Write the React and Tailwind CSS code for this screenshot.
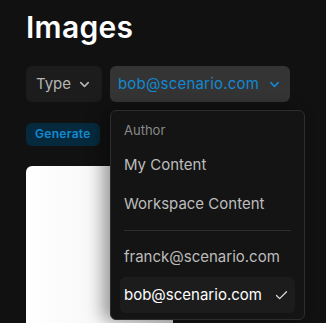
import React from "react";
import { ChevronDown, Check } from "lucide-react";

export default function App() {
  return (
    <div
      className="w-[326px] h-[323px] bg-[#111111] overflow-hidden relative"
      style={{ fontFamily: "Inter, 'Noto Sans', sans-serif" }}
    >
      <div className="pl-[26px] pt-[10px]">
        <h1 className="text-[30px] leading-[34px] font-semibold tracking-[0.3px] text-white">Images</h1>

        <div className="flex gap-2 mt-[22px]">
          <button className="h-9 w-[76px] rounded-md bg-[#1c1c1c] text-[#b5b5b5] text-[15px] flex items-center justify-center gap-1.5">
            Type <ChevronDown size={15} strokeWidth={2.5} />
          </button>
          <button className="h-9 w-[180px] rounded-md bg-[#343434] text-[#1289d1] text-[15px] tracking-[0.2px] flex items-center justify-center gap-2">
            bob@scenario.com <ChevronDown size={15} strokeWidth={2.5} />
          </button>
        </div>

        <div className="mt-[18px]">
          <span className="inline-flex h-[23px] px-[9px] items-center rounded-md bg-[#062a3d] text-[#1289d1] text-[12px] font-semibold tracking-[0.3px]">
            Generate
          </span>
        </div>

        <div className="mt-[20px] w-[147px] h-[170px] rounded-md bg-gradient-to-r from-white via-[#f7f7f7] to-[#c9c9c9]" />
      </div>

      {/* dropdown menu */}
      <div className="absolute left-[110px] top-[110px] w-[195px] h-[210px] rounded-md border border-[#2d2d2d] bg-[#141414] shadow-[-8px_0_16px_rgba(0,0,0,0.35)] px-[9px] pt-[10px]">
        <div className="px-[4px] h-[20px] flex items-center text-[13px] text-[#8a8a8a]">Author</div>
        <div className="px-[4px] h-[39px] mt-[5px] flex items-center text-[15px] text-[#bdbdbd]">My Content</div>
        <div className="px-[4px] h-[39px] flex items-center text-[15px] text-[#bdbdbd]">Workspace Content</div>
        <div className="mx-[4px] mt-[6px] mb-[7px] h-px bg-[#2e2e2e]" />
        <div className="px-[4px] h-[39px] flex items-center text-[15px] text-[#bdbdbd]">franck@scenario.com</div>
        <div className="h-[36px] rounded-md bg-[#1c1c1c] flex items-center justify-between px-[4px] pr-[6px] text-[15px] text-white">
          bob@scenario.com <Check size={15} strokeWidth={2} className="text-[#dddddd]" />
        </div>
      </div>
    </div>
  );
}
